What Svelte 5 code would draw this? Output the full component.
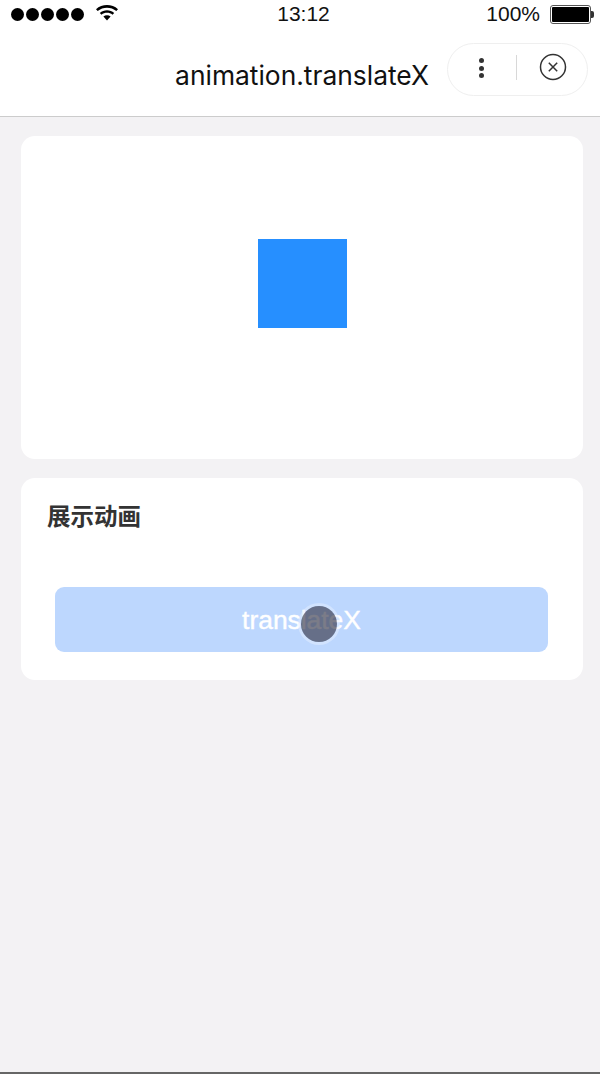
<script>
  const dots = [0, 1, 2, 3, 4];
</script>

<div class="page">
  <header class="top">
    <div class="status">
      <div class="status-left">
        <div class="signal">
          {#each dots as d (d)}
            <span class="dot"></span>
          {/each}
        </div>
        <svg class="wifi" width="24" height="18" viewBox="0 0 24 18">
          <path d="M1 6.2C7 .6 17 .6 23 6.2l-1.7 1.9C16.200 3.500 7.800 3.500 2.700 8.100z" fill="#000" />
          <path d="M4.800 10C8.800 6.400 15.200 6.400 19.200 10l-1.700 1.800C14.500 9.200 9.500 9.200 6.500 11.800z" fill="#000" />
          <path d="M8.400 13.600c2-1.700 5.200-1.700 7.200 0L12 17.500z" fill="#000" />
        </svg>
      </div>
      <div class="time">13:12</div>
      <div class="status-right">
        <span class="pct">100%</span>
        <div class="battery"><div class="charge"></div></div>
        <div class="nub"></div>
      </div>
    </div>
    <div class="nav">
      <div class="title">animation.translateX</div>
      <div class="capsule">
        <div class="more">
          <span></span><span></span><span></span>
        </div>
        <div class="sep"></div>
        <svg class="close" width="28" height="28" viewBox="0 0 28 28" fill="none" stroke="#333" stroke-width="1.500">
          <circle cx="14" cy="14" r="12.500" />
          <path d="M9.800 9.800l8.400 8.400M18.200 9.800l-8.400 8.400" />
        </svg>
      </div>
    </div>
  </header>

  <main class="content">
    <section class="card stage">
      <div class="box"></div>
    </section>
    <section class="card controls">
      <h2>展示动画</h2>
      <div class="btn-wrap">
        <div class="btn">
          translateX
          <div class="touch"></div>
        </div>
      </div>
    </section>
  </main>
</div>

<style>
  :global(body) {
    margin: 0;
    background: #f3f2f4;
  }

  .page {
    height: 1074px;
    box-sizing: border-box;
    display: flex;
    flex-direction: column;
    background: #f3f2f4;
    border-bottom: 2px solid #666;
    font-family: "Liberation Sans", Arial, "Noto Sans CJK SC", sans-serif;
    overflow: hidden;
  }

  .top {
    height: 117px;
    box-sizing: border-box;
    background: #fff;
    border-bottom: 1px solid #ccc;
    flex-shrink: 0;
  }

  .status {
    height: 28px;
    display: flex;
    align-items: center;
    justify-content: space-between;
    padding: 0 6px 0 11px;
    color: #111;
  }

  .status-left {
    display: flex;
    align-items: center;
    gap: 11px;
    width: 130px;
  }

  .signal {
    display: flex;
    gap: 2px;
  }

  .dot {
    width: 13px;
    height: 13px;
    border-radius: 50%;
    background: #000;
  }

  .wifi {
    margin-top: -4px;
  }

  .time {
    font-size: 21px;
    line-height: 28px;
    margin-left: 2px;
  }

  .status-right {
    display: flex;
    align-items: center;
    justify-content: flex-end;
    width: 130px;
  }

  .pct {
    font-size: 21px;
    margin-right: 10px;
  }

  .battery {
    width: 41px;
    height: 19px;
    box-sizing: border-box;
    border: 1px solid #555;
    border-radius: 3px;
    padding: 1px;
  }

  .charge {
    height: 100%;
    background: #000;
    border-radius: 1px;
  }

  .nub {
    width: 3px;
    height: 7px;
    background: #333;
    border-radius: 0 2px 2px 0;
  }

  .nav {
    height: 88px;
    display: flex;
    align-items: center;
    justify-content: flex-end;
    padding: 0 12px 6px 0;
    box-sizing: border-box;
  }

  .title {
    font-family: "Inter", "Liberation Sans", sans-serif;
    font-size: 26.400px;
    color: #111;
    margin: 11px 18px 0 0;
  }

  .capsule {
    width: 141px;
    height: 53px;
    box-sizing: border-box;
    border: 1px solid #efefef;
    border-radius: 27px;
    display: flex;
    align-items: center;
    padding-left: 31px;
  }

  .more {
    display: flex;
    flex-direction: column;
    gap: 2.500px;
    width: 5px;
    margin-top: -2px;
  }

  .more span {
    width: 5px;
    height: 5px;
    border-radius: 50%;
    background: #333;
  }

  .sep {
    width: 1px;
    height: 25px;
    background: #d8d8d8;
    margin: -3px 22px 0 32px;
  }

  .close {
    margin-top: -4px;
  }

  .content {
    padding: 19px 17px 0 21px;
    display: flex;
    flex-direction: column;
    gap: 19px;
  }

  .card {
    background: #fff;
    border-radius: 14px;
  }

  .stage {
    height: 323px;
    display: flex;
    justify-content: center;
    padding-top: 103px;
    box-sizing: border-box;
  }

  .box {
    width: 89px;
    height: 89px;
    background: #268fff;
  }

  .controls {
    height: 202px;
    box-sizing: border-box;
    padding: 23px 35px 0 34px;
  }

  h2 {
    margin: 0 0 0 -8px;
    font-size: 23.500px;
    line-height: 28px;
    font-weight: 700;
    color: #333;
    font-family: "Noto Sans CJK SC", sans-serif;
  }

  .btn-wrap {
    margin-top: 58px;
  }

  .btn {
    position: relative;
    height: 65px;
    border-radius: 9px;
    background: #bdd7fe;
    color: #fff;
    font-size: 26.400px;
    -webkit-text-stroke: 0.4px #fff;
    padding-top: 1px;
    box-sizing: border-box;
    display: flex;
    align-items: center;
    justify-content: center;
  }

  .touch {
    position: absolute;
    left: 246px;
    top: 19px;
    width: 36px;
    height: 36px;
    border-radius: 50%;
    background: rgba(60, 62, 80, 0.68);
    box-shadow: 0 0 0 3px rgba(230, 240, 255, 0.5);
  }
</style>
